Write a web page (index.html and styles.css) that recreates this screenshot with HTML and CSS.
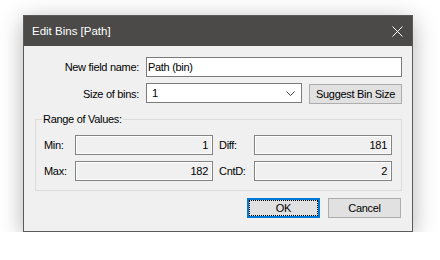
FILE: index.html
```html
<!DOCTYPE html>
<html lang="en">
<head>
    <meta charset="UTF-8">
    <meta name="viewport" content="width=device-width, initial-scale=1.0">
    <title>Edit Bins [Path]</title>
    <link rel="stylesheet" href="styles.css">
</head>
<body>
    <div class="dialog">
        <div class="titlebar">
            <span class="title">Edit Bins [Path]</span>
            <svg class="close" width="11" height="11" viewBox="0 0 11 11">
                <path d="M0.5 0.5 L10.5 10.5 M10.5 0.5 L0.5 10.5" stroke="#fff" stroke-width="1" fill="none"/>
            </svg>
        </div>
        <div class="content">
            <div class="form">
                <label>New field name:</label>
                <div class="textbox">Path (bin)</div>
                <label>Size of bins:</label>
                <div class="size-row">
                    <div class="select">
                        <span>1</span>
                        <svg width="9" height="5" viewBox="0 0 9 5">
                            <polyline points="0.5,0.5 4.5,4.5 8.5,0.5" stroke="#444" stroke-width="1" fill="none"/>
                        </svg>
                    </div>
                    <div class="btn suggest">Suggest Bin Size</div>
                </div>
            </div>

            <fieldset class="range">
                <legend>Range of Values:</legend>
                <div class="range-grid">
                    <span>Min:</span>
                    <div class="value">1</div>
                    <span>Diff:</span>
                    <div class="value">181</div>
                    <span>Max:</span>
                    <div class="value">182</div>
                    <span>CntD:</span>
                    <div class="value">2</div>
                </div>
            </fieldset>

            <div class="actions">
                <div class="btn default">OK</div>
                <div class="btn">Cancel</div>
            </div>
        </div>
    </div>
</body>
</html>
```

FILE: styles.css
```css
body { margin: 0; background: #fff; font-family: "Liberation Sans", Arial, sans-serif; font-size: 11px; letter-spacing: -0.3px; color: #000; }
.dialog { box-sizing: border-box; width: 390px; margin: 15px 0 0 23px; background: #f0f0f0; border: 1px solid #5a5a5a; box-shadow: 0 5px 22px rgba(0,0,0,0.3); }
.titlebar { height: 30px; background: #4b4a48; display: flex; align-items: center; justify-content: space-between; padding: 0 9px 0 8px; color: #fff; }
.title { font-size: 11.5px; letter-spacing: 0; }
.close { display: block; }
.content { padding: 11px 10px 13px 12px; }
.form { display: grid; grid-template-columns: 103px 1fr; column-gap: 7px; row-gap: 6px; align-items: center; }
.form label { text-align: right; }
.textbox { box-sizing: border-box; height: 20px; line-height: 18px; background: #fff; border: 1px solid #7a7a7a; padding-left: 1px; }
.size-row { display: flex; gap: 7px; align-items: flex-start; }
.select { box-sizing: border-box; width: 156px; height: 20px; background: #fff; border: 1px solid #7a7a7a; display: flex; align-items: center; justify-content: space-between; padding: 0 6px 0 5px; }
.btn { box-sizing: border-box; position: relative; width: 73px; height: 20px; line-height: 18px; text-align: center; background: #e1e1e1; border: 1px solid #adadad; }
.suggest { flex: 1; margin-top: 1px; }
.range { margin: 9px 0 0 -1px; padding: 9px 9px 9px 8px; border: 1px solid #dcdcdc; }
.range legend { padding: 0 1px; margin-left: -2px; line-height: 13px; }
.range-grid { display: grid; grid-template-columns: 25px 138px 29px 138px; column-gap: 6px; row-gap: 6px; align-items: center; }
.value { box-sizing: border-box; height: 20px; line-height: 18px; text-align: right; padding-right: 4px; background: #f0f0f0; border: 1px solid #838383; box-shadow: inset 0 0 0 1px #fff; }
.actions { display: flex; justify-content: flex-end; gap: 8px; margin-top: 7px; padding-right: 1px; }
.default { border-color: #0078d7; box-shadow: inset 0 0 0 1px #0078d7; }
.default::after { content: ""; position: absolute; inset: 1px; border: 1px dotted #000; }
```
